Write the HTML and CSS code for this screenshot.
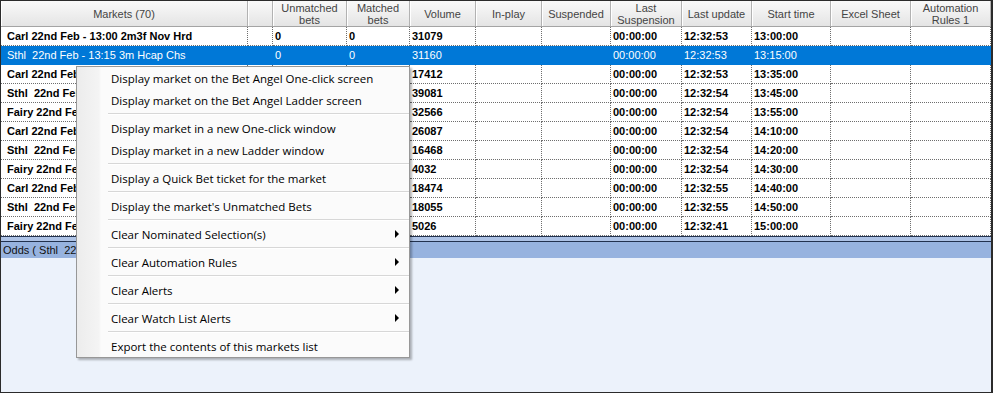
FILE: index.html
```html
<!DOCTYPE html>
<html>
<head>
<meta charset="utf-8">
<link rel="stylesheet" href="styles.css">
</head>
<body>
<div class="app">
  <div class="grid">
    <div class="row head">
      <div class="c">Markets (70)</div>
      <div class="c"></div>
      <div class="c">Unmatched<br>bets</div>
      <div class="c">Matched<br>bets</div>
      <div class="c">Volume</div>
      <div class="c">In-play</div>
      <div class="c">Suspended</div>
      <div class="c">Last<br>Suspension</div>
      <div class="c">Last update</div>
      <div class="c">Start time</div>
      <div class="c">Excel Sheet</div>
      <div class="c">Automation<br>Rules 1</div>
    </div>
    <div class="row">
      <div class="c name">Carl 22nd Feb - 13:00 2m3f Nov Hrd</div><div class="c"></div><div class="c">0</div><div class="c">0</div><div class="c">31079</div><div class="c"></div><div class="c"></div><div class="c">00:00:00</div><div class="c">12:32:53</div><div class="c">13:00:00</div><div class="c"></div><div class="c"></div>
    </div>
    <div class="row sel">
      <div class="c name">Sthl  22nd Feb - 13:15 3m Hcap Chs</div><div class="c"></div><div class="c">0</div><div class="c">0</div><div class="c">31160</div><div class="c"></div><div class="c"></div><div class="c">00:00:00</div><div class="c">12:32:53</div><div class="c">13:15:00</div><div class="c"></div><div class="c"></div>
    </div>
    <div class="row">
      <div class="c name">Carl 22nd Feb</div><div class="c"></div><div class="c"></div><div class="c"></div><div class="c">17412</div><div class="c"></div><div class="c"></div><div class="c">00:00:00</div><div class="c">12:32:53</div><div class="c">13:35:00</div><div class="c"></div><div class="c"></div>
    </div>
    <div class="row">
      <div class="c name">Sthl  22nd Feb</div><div class="c"></div><div class="c"></div><div class="c"></div><div class="c">39081</div><div class="c"></div><div class="c"></div><div class="c">00:00:00</div><div class="c">12:32:54</div><div class="c">13:45:00</div><div class="c"></div><div class="c"></div>
    </div>
    <div class="row">
      <div class="c name">Fairy 22nd Feb</div><div class="c"></div><div class="c"></div><div class="c"></div><div class="c">32566</div><div class="c"></div><div class="c"></div><div class="c">00:00:00</div><div class="c">12:32:54</div><div class="c">13:55:00</div><div class="c"></div><div class="c"></div>
    </div>
    <div class="row">
      <div class="c name">Carl 22nd Feb</div><div class="c"></div><div class="c"></div><div class="c"></div><div class="c">26087</div><div class="c"></div><div class="c"></div><div class="c">00:00:00</div><div class="c">12:32:54</div><div class="c">14:10:00</div><div class="c"></div><div class="c"></div>
    </div>
    <div class="row">
      <div class="c name">Sthl  22nd Feb</div><div class="c"></div><div class="c"></div><div class="c"></div><div class="c">16468</div><div class="c"></div><div class="c"></div><div class="c">00:00:00</div><div class="c">12:32:54</div><div class="c">14:20:00</div><div class="c"></div><div class="c"></div>
    </div>
    <div class="row">
      <div class="c name">Fairy 22nd Feb</div><div class="c"></div><div class="c"></div><div class="c"></div><div class="c">4032</div><div class="c"></div><div class="c"></div><div class="c">00:00:00</div><div class="c">12:32:54</div><div class="c">14:30:00</div><div class="c"></div><div class="c"></div>
    </div>
    <div class="row">
      <div class="c name">Carl 22nd Feb</div><div class="c"></div><div class="c"></div><div class="c"></div><div class="c">18474</div><div class="c"></div><div class="c"></div><div class="c">00:00:00</div><div class="c">12:32:55</div><div class="c">14:40:00</div><div class="c"></div><div class="c"></div>
    </div>
    <div class="row">
      <div class="c name">Sthl  22nd Feb</div><div class="c"></div><div class="c"></div><div class="c"></div><div class="c">18055</div><div class="c"></div><div class="c"></div><div class="c">00:00:00</div><div class="c">12:32:55</div><div class="c">14:50:00</div><div class="c"></div><div class="c"></div>
    </div>
    <div class="row">
      <div class="c name">Fairy 22nd Feb</div><div class="c"></div><div class="c"></div><div class="c"></div><div class="c">5026</div><div class="c"></div><div class="c"></div><div class="c">00:00:00</div><div class="c">12:32:41</div><div class="c">15:00:00</div><div class="c"></div><div class="c"></div>
    </div>
  </div>
  <div class="split"></div>
  <div class="odds-bar">Odds ( Sthl  22nd Feb</div>
  <div class="odds-body"></div>

  <div class="menu">
    <div class="mi">Display market on the Bet Angel One-click screen</div>
    <div class="mi">Display market on the Bet Angel Ladder screen</div>
    <div class="sep"></div>
    <div class="mi">Display market in a new One-click window</div>
    <div class="mi">Display market in a new Ladder window</div>
    <div class="sep"></div>
    <div class="mi">Display a Quick Bet ticket for the market</div>
    <div class="sep"></div>
    <div class="mi">Display the market's Unmatched Bets</div>
    <div class="sep"></div>
    <div class="mi">Clear Nominated Selection(s)<span class="arrow"></span></div>
    <div class="sep"></div>
    <div class="mi">Clear Automation Rules<span class="arrow"></span></div>
    <div class="sep"></div>
    <div class="mi">Clear Alerts<span class="arrow"></span></div>
    <div class="sep"></div>
    <div class="mi">Clear Watch List Alerts<span class="arrow"></span></div>
    <div class="sep"></div>
    <div class="mi">Export the contents of this markets list</div>
  </div>
</div>
</body>
</html>
```
FILE: styles.css
```css
html, body {
  margin: 0;
  padding: 0;
}
body {
  width: 993px;
  height: 393px;
  overflow: hidden;
  background: #fff;
  font-family: "Liberation Sans", Arial, sans-serif;
}
.app {
  position: relative;
  box-sizing: border-box;
  width: 993px;
  height: 393px;
  border: 1px solid #2b2b2b;
  border-right-width: 2px;
  display: flex;
  flex-direction: column;
  background: #ecf2fb;
}
.grid {
  background: #fff;
}
.row {
  display: grid;
  grid-template-columns: 247px 25px 74px 63px 66px 66px 69px 71px 70px 79px 80px 80px;
  height: 19px;
  font-size: 11px;
  font-weight: bold;
  color: #000;
}
.row .c {
  box-sizing: border-box;
  border-right: 1px dotted #6e6e6e;
  border-bottom: 1px dotted #6e6e6e;
  padding-left: 2px;
  line-height: 18px;
  white-space: pre;
  overflow: hidden;
}
.row .c.name {
  padding-left: 6px;
}
.row.sel {
  background: #0078d7;
  color: #fff;
  font-weight: normal;
}
.row.sel .c {
  border-color: transparent;
}
.row.head {
  height: 26px;
  font-weight: normal;
  color: #444;
  background: linear-gradient(#f9f9f9, #f0f0f0 45%, #e4e4e4);
  border-bottom: 1px solid #a4a4a4;
  box-sizing: border-box;
}
.row.head .c {
  border-bottom: none;
  border-right: 1px solid #b2b2b2;
  box-shadow: inset 1px 0 0 #ffffff;
  display: flex;
  align-items: center;
  justify-content: center;
  text-align: center;
  line-height: 12px;
  padding: 0;
  white-space: normal;
}
.split {
  height: 6px;
  box-sizing: border-box;
  border-top: 1px solid #22324f;
  border-bottom: 1px solid #22324f;
  background: #aec3e6;
}
.odds-bar {
  height: 16px;
  background: #97b3df;
  font-size: 11px;
  line-height: 16px;
  padding-left: 2px;
  color: #111;
  white-space: pre;
}
.odds-body {
  flex: 1;
  background: #ecf2fb;
}
.menu {
  position: absolute;
  left: 75px;
  top: 65px;
  width: 334px;
  box-sizing: border-box;
  border: 1px solid #979797;
  background: linear-gradient(to right, #ececec 0, #f4f4f4 22px, #fbfbfb 24px, #fbfbfb 100%);
  box-shadow: 2px 2px 2px rgba(0, 0, 0, 0.28);
  font-family: "Open Sans", "Liberation Sans", sans-serif;
  font-size: 11.5px;
  color: #000;
}
.mi {
  height: 22px;
  display: flex;
  align-items: center;
  justify-content: space-between;
  padding: 0 10px 0 34px;
  white-space: nowrap;
}
.arrow {
  width: 0;
  height: 0;
  border-left: 4px solid #000;
  border-top: 4px solid transparent;
  border-bottom: 4px solid transparent;
}
.sep {
  height: 6px;
  box-sizing: border-box;
  padding: 2px 0 0 31px;
}
.sep::before {
  content: "";
  display: block;
  height: 1px;
  background: #d7d7d7;
  border-bottom: 1px solid #ffffff;
}
```
